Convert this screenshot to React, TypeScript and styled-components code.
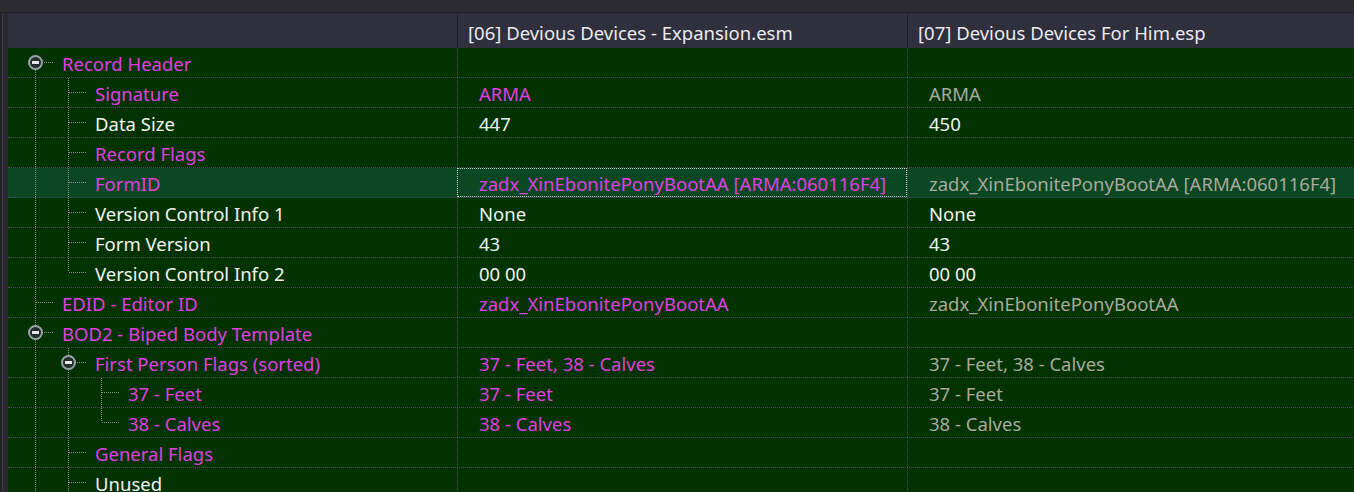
import React from 'react';
import styled, { createGlobalStyle, css } from 'styled-components';

const Global = createGlobalStyle`
  html, body { margin: 0; padding: 0; background: #2b2a33; overflow: hidden; }
  body { font-family: "Noto Sans", "Open Sans", sans-serif; }
  #root { width: 1354px; height: 492px; }
`;

type Tone = 'magenta' | 'white' | 'grey';
const toneColor: Record<Tone, string> = {
  magenta: '#e03fe2',
  white: '#f2f2ee',
  grey: '#a9a99d',
};

const Frame = styled.div`
  width: 1354px;
  height: 492px;
  display: flex;
  flex-direction: column;
  background: #2b2a33;
  overflow: hidden;
`;

const TopBand = styled.div`
  flex: none;
  height: 12px;
  background: #2c2b34;
  border-bottom: 1px solid #1f1e26;
`;

const Main = styled.div`
  flex: 1;
  min-height: 0;
  display: flex;
`;

const LeftStrip = styled.div`
  flex: none;
  width: 8px;
  background: linear-gradient(to right, #232229 0 2px, #3e3d47 2px 3px, #2a2930 3px);
`;

const Grid = styled.div`
  flex: 1;
  min-width: 0;
  display: flex;
  flex-direction: column;
`;

const columns = css`
  display: grid;
  grid-template-columns: 449px 450px 1fr;
`;

const HeaderRow = styled.div`
  ${columns};
  flex: none;
  height: 35px;
  background: #302f3d;
`;

const HeaderCell = styled.div<{ $divider?: boolean }>`
  display: flex;
  align-items: center;
  padding: 3px 0 0 10px;
  color: #e9e9ef;
  font-size: 18.5px;
  white-space: nowrap;
  overflow: hidden;
  border-left: ${p => (p.$divider ? '1px solid #201f28' : 'none')};
`;

const Row = styled.div<{ $selected?: boolean }>`
  ${columns};
  flex: none;
  box-sizing: border-box;
  height: 30px;
  background: ${p => (p.$selected ? '#0b4722' : '#013200')};
  border-bottom: 1px dotted #4d4c63;
`;

const TreeCell = styled.div`
  display: flex;
  align-items: stretch;
  padding-left: 11px;
  min-width: 0;
  overflow: hidden;
`;

type GuideKind = 'blank' | 'pipe' | 'tee' | 'elbow' | 'openFirst' | 'openMid';

const dottedV = 'repeating-linear-gradient(to bottom, #8d8d9c 0 1px, transparent 1px 2px)';
const dottedH = 'repeating-linear-gradient(to right, #8d8d9c 0 1px, transparent 1px 2px)';

const Guide = styled.div<{ $kind: GuideKind }>`
  position: relative;
  flex: none;
  width: 33px;

  &::before {
    content: '';
    position: absolute;
    left: 16px;
    width: 1px;
    background: ${dottedV};
    display: ${p => (p.$kind === 'blank' ? 'none' : 'block')};
    top: ${p => (p.$kind === 'openFirst' ? '14px' : '0')};
    bottom: ${p => (p.$kind === 'elbow' ? '15px' : '-1px')};
  }

  &::after {
    content: '';
    position: absolute;
    left: 17px;
    top: 14px;
    width: 17px;
    height: 1px;
    background: ${dottedH};
    display: ${p => (p.$kind === 'blank' || p.$kind === 'pipe' ? 'none' : 'block')};
  }
`;

const Expander = styled.span`
  position: absolute;
  z-index: 1;
  left: 9px;
  top: 7px;
  box-sizing: border-box;
  width: 15px;
  height: 15px;
  border-radius: 50%;
  border: 2px solid #9ca2ab;
  background: #23302a;
  display: flex;
  align-items: center;
  justify-content: center;

  &::after {
    content: '';
    width: 7px;
    height: 3px;
    background: #e4e6ea;
  }
`;

const Label = styled.span<{ $tone: Tone }>`
  align-self: center;
  margin: 2px 0 0 10px;
  font-size: 18.5px;
  color: ${p => toneColor[p.$tone]};
  white-space: nowrap;
`;

const ValueCell = styled.div<{ $tone: Tone; $focus?: boolean }>`
  display: flex;
  align-items: center;
  padding: 2px 0 0 21px;
  border-left: 1px dotted #4d4c63;
  font-size: 18.5px;
  color: ${p => toneColor[p.$tone]};
  white-space: nowrap;
  overflow: hidden;
  min-width: 0;
  outline: ${p => (p.$focus ? '1px dotted #cfcfcf' : 'none')};
  outline-offset: -1px;
`;

type Val = [string, Tone] | null;
interface Item {
  guides: GuideKind[];
  label: string;
  tone: Tone;
  v1: Val;
  v2: Val;
  selected?: boolean;
}

const items: Item[] = [
  { guides: ['openFirst'], label: 'Record Header', tone: 'magenta', v1: null, v2: null },
  { guides: ['pipe', 'tee'], label: 'Signature', tone: 'magenta', v1: ['ARMA', 'magenta'], v2: ['ARMA', 'grey'] },
  { guides: ['pipe', 'tee'], label: 'Data Size', tone: 'white', v1: ['447', 'white'], v2: ['450', 'white'] },
  { guides: ['pipe', 'tee'], label: 'Record Flags', tone: 'magenta', v1: null, v2: null },
  {
    guides: ['pipe', 'tee'],
    label: 'FormID',
    tone: 'magenta',
    v1: ['zadx_XinEbonitePonyBootAA [ARMA:060116F4]', 'magenta'],
    v2: ['zadx_XinEbonitePonyBootAA [ARMA:060116F4]', 'grey'],
    selected: true,
  },
  { guides: ['pipe', 'tee'], label: 'Version Control Info 1', tone: 'white', v1: ['None', 'white'], v2: ['None', 'white'] },
  { guides: ['pipe', 'tee'], label: 'Form Version', tone: 'white', v1: ['43', 'white'], v2: ['43', 'white'] },
  { guides: ['pipe', 'elbow'], label: 'Version Control Info 2', tone: 'white', v1: ['00 00', 'white'], v2: ['00 00', 'white'] },
  { guides: ['tee'], label: 'EDID - Editor ID', tone: 'magenta', v1: ['zadx_XinEbonitePonyBootAA', 'magenta'], v2: ['zadx_XinEbonitePonyBootAA', 'grey'] },
  { guides: ['openMid'], label: 'BOD2 - Biped Body Template', tone: 'magenta', v1: null, v2: null },
  { guides: ['pipe', 'openMid'], label: 'First Person Flags (sorted)', tone: 'magenta', v1: ['37 - Feet, 38 - Calves', 'magenta'], v2: ['37 - Feet, 38 - Calves', 'grey'] },
  { guides: ['pipe', 'pipe', 'tee'], label: '37 - Feet', tone: 'magenta', v1: ['37 - Feet', 'magenta'], v2: ['37 - Feet', 'grey'] },
  { guides: ['pipe', 'pipe', 'elbow'], label: '38 - Calves', tone: 'magenta', v1: ['38 - Calves', 'magenta'], v2: ['38 - Calves', 'grey'] },
  { guides: ['pipe', 'tee'], label: 'General Flags', tone: 'magenta', v1: null, v2: null },
  { guides: ['pipe', 'tee'], label: 'Unused', tone: 'white', v1: null, v2: null },
];

export default function App() {
  return (
    <>
      <Global />
      <Frame>
        <TopBand />
        <Main>
          <LeftStrip />
          <Grid>
            <HeaderRow>
              <HeaderCell />
              <HeaderCell $divider>[06] Devious Devices - Expansion.esm</HeaderCell>
              <HeaderCell $divider>[07] Devious Devices For Him.esp</HeaderCell>
            </HeaderRow>
            {items.map((it, i) => (
              <Row key={i} $selected={it.selected}>
                <TreeCell>
                  {it.guides.map((g, j) => (
                    <Guide key={j} $kind={g}>
                      {(g === 'openFirst' || g === 'openMid') && <Expander />}
                    </Guide>
                  ))}
                  <Label $tone={it.tone}>{it.label}</Label>
                </TreeCell>
                <ValueCell $tone={it.v1 ? it.v1[1] : 'white'} $focus={it.selected}>
                  {it.v1 ? it.v1[0] : ''}
                </ValueCell>
                <ValueCell $tone={it.v2 ? it.v2[1] : 'white'}>{it.v2 ? it.v2[0] : ''}</ValueCell>
              </Row>
            ))}
          </Grid>
        </Main>
      </Frame>
    </>
  );
}
